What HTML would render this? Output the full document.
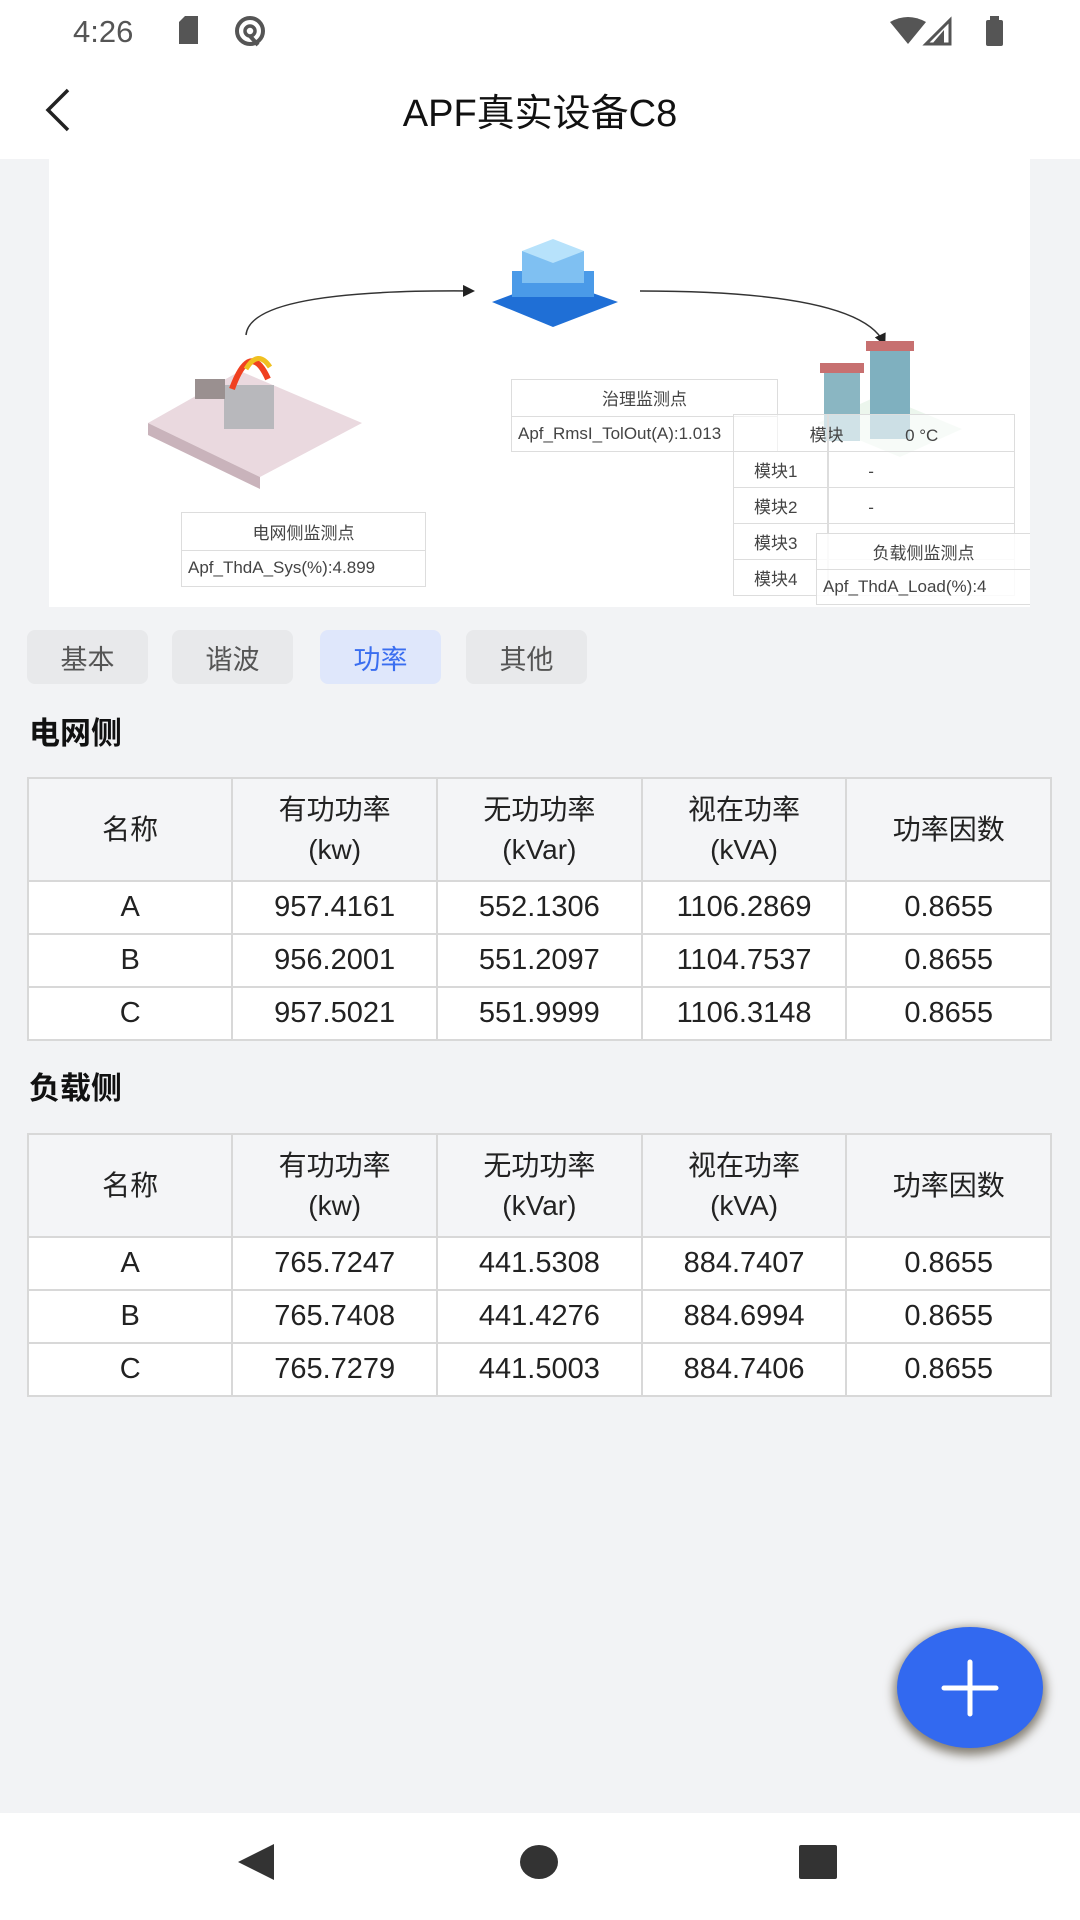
<!DOCTYPE html>
<html><head><meta charset="utf-8">
<style>
*{margin:0;padding:0;box-sizing:border-box}
body{width:1080px;height:1920px;position:relative;background:#f2f3f5;font-family:"Liberation Sans","Noto Sans CJK SC",sans-serif;color:#222;overflow:hidden}
.abs{position:absolute}
.top{left:0;top:0;width:1080px;height:159px;background:#fff}
.time{left:73px;top:14px;font-size:31px;color:#555}
.title{left:0;width:1080px;top:82px;text-align:center;font-size:38px;color:#111}
.diag{left:49px;top:159px;width:981px;height:448px;background:#fff}
.box{position:absolute;border:1.5px solid #ddd;background:rgba(255,255,255,.85);font-size:17px;color:#444}
.box div{height:50%;display:flex;align-items:center;justify-content:center;white-space:nowrap;overflow:hidden}
.box div+div{border-top:1.5px solid #ddd;justify-content:flex-start;padding-left:6px}
.tab{position:absolute;top:630px;height:54px;width:121px;border-radius:8px;background:#e8e9eb;font-size:27px;color:#555;display:flex;align-items:center;justify-content:center}
.tab.on{background:#dfe7fb;color:#3a6ef0}
.h{position:absolute;left:29px;font-size:31px;font-weight:bold;color:#111}
table{position:absolute;left:27px;width:1025px;border-collapse:collapse;font-size:29px;text-align:center;color:#222}
td{border:2px solid #d8d8d8;background:#fff;width:205px}
tr.hd td{background:#f4f5f7;height:103px;line-height:40px;font-size:28px}
tr.r td{height:53px}
.nav{left:0;top:1813px;width:1080px;height:107px;background:#fff}
.fab{left:897px;top:1627px;width:146px;height:121px;border-radius:50%;background:#3269f0;box-shadow:0 4px 10px 3px rgba(60,50,30,.6)}
</style></head><body>
<div class="abs top"></div>
<div class="abs time">4:26</div>
<svg class="abs" style="left:176px;top:16px" width="110" height="36" viewBox="0 0 110 36">
<path d="M3 6 L9 0 H22 V28 H3 Z" fill="#555"/>
<circle cx="74" cy="15" r="13" fill="none" stroke="#555" stroke-width="4"/>
<circle cx="74" cy="15" r="5" fill="none" stroke="#555" stroke-width="3.5"/>
<path d="M74 20 L82 29" stroke="#555" stroke-width="4"/>
</svg>
<svg class="abs" style="left:888px;top:16px" width="120" height="34" viewBox="0 0 120 34">
<path d="M2 6 Q20 -4 38 6 L20 28 Z" fill="#555"/>
<path d="M62 4 V28 H38 Z" fill="none" stroke="#555" stroke-width="3"/>
<path d="M56 14 V28 H44 Z" fill="#555"/>
<rect x="98" y="4" width="17" height="26" rx="2" fill="#555"/><rect x="102" y="0" width="9" height="5" fill="#555"/>
</svg>
<svg class="abs" style="left:40px;top:86px" width="40" height="48" viewBox="0 0 40 48"><path d="M28 4 L8 24 L28 44" fill="none" stroke="#222" stroke-width="3.5"/></svg>
<div class="abs title">APF真实设备C8</div>

<div class="abs diag"></div>
<svg class="abs" style="left:0;top:159px" width="1080" height="448">
<defs><marker id="m" markerWidth="8" markerHeight="8" refX="6" refY="4" orient="auto"><path d="M0 0 L8 4 L0 8Z" fill="#222"/></marker></defs>
<path d="M246 176 Q250 130 472 132" fill="none" stroke="#333" stroke-width="1.5" marker-end="url(#m)"/>
<path d="M640 132 Q860 132 884 184" fill="none" stroke="#333" stroke-width="1.5" marker-end="url(#m)"/>
<path d="M492 143 L553 120 L618 143 L553 168Z" fill="#1f6fd6"/>
<rect x="512" y="112" width="82" height="26" fill="#4a9ae8"/>
<rect x="522" y="92" width="62" height="32" fill="#7fc0f2"/>
<path d="M522 92 L553 80 L584 92 L553 104Z" fill="#b7e2fb"/>
<path d="M148 264 L240 212 L362 264 L260 318Z" fill="#ead9df"/>
<path d="M148 264 L260 318 L260 330 L148 276Z" fill="#c9b3bb"/>
<rect x="224" y="226" width="50" height="44" fill="#b8b8bc"/>
<rect x="195" y="220" width="30" height="20" fill="#9a9090"/>
<path d="M232 230 Q250 180 268 220" fill="none" stroke="#f04020" stroke-width="6"/>
<path d="M246 210 Q258 190 270 208" fill="none" stroke="#f0c020" stroke-width="5"/>
<path d="M818 264 L880 236 L962 270 L900 298Z" fill="#e4f2e6" opacity=".7"/>
<rect x="824" y="212" width="36" height="70" fill="#8ab6c2"/>
<rect x="870" y="190" width="40" height="90" fill="#7fb0bf"/>
<rect x="866" y="182" width="48" height="10" fill="#c77070"/>
<rect x="820" y="204" width="44" height="10" fill="#c77070"/>
</svg>
<div class="box" style="left:511px;top:379px;width:267px;height:73px"><div>治理监测点</div><div>Apf_RmsI_TolOut(A):1.013</div></div>
<div class="box" style="left:181px;top:512px;width:245px;height:75px"><div>电网侧监测点</div><div>Apf_ThdA_Sys(%):4.899</div></div>
<div class="box" style="left:733px;top:414px;width:282px;height:182px;background:rgba(255,255,255,.6)">
<div style="height:36px;border:0;justify-content:center">模块 &nbsp; &nbsp; &nbsp; &nbsp; &nbsp; &nbsp; 0 °C</div>
<div style="height:36px;justify-content:flex-start;padding-left:20px">模块1 &nbsp; &nbsp; &nbsp; &nbsp; &nbsp; &nbsp; &nbsp; -</div>
<div style="height:36px;justify-content:flex-start;padding-left:20px">模块2 &nbsp; &nbsp; &nbsp; &nbsp; &nbsp; &nbsp; &nbsp; -</div>
<div style="height:36px;justify-content:flex-start;padding-left:20px">模块3</div>
<div style="height:36px;justify-content:flex-start;padding-left:20px">模块4</div>
</div>
<div class="abs" style="left:827px;top:414px;width:1.5px;height:182px;background:#ddd"></div>
<div class="box" style="left:816px;top:533px;width:214px;height:72px;border-right:0"><div>负载侧监测点</div><div>Apf_ThdA_Load(%):4</div></div>

<div class="tab" style="left:27px">基本</div>
<div class="tab" style="left:172px">谐波</div>
<div class="tab on" style="left:320px">功率</div>
<div class="tab" style="left:466px">其他</div>

<div class="h" style="top:708px">电网侧</div>
<table style="top:777px">
<tr class="hd"><td>名称</td><td>有功功率<br>(kw)</td><td>无功功率<br>(kVar)</td><td>视在功率<br>(kVA)</td><td>功率因数</td></tr>
<tr class="r"><td>A</td><td>957.4161</td><td>552.1306</td><td>1106.2869</td><td>0.8655</td></tr>
<tr class="r"><td>B</td><td>956.2001</td><td>551.2097</td><td>1104.7537</td><td>0.8655</td></tr>
<tr class="r"><td>C</td><td>957.5021</td><td>551.9999</td><td>1106.3148</td><td>0.8655</td></tr>
</table>
<div class="h" style="top:1063px">负载侧</div>
<table style="top:1133px">
<tr class="hd"><td>名称</td><td>有功功率<br>(kw)</td><td>无功功率<br>(kVar)</td><td>视在功率<br>(kVA)</td><td>功率因数</td></tr>
<tr class="r"><td>A</td><td>765.7247</td><td>441.5308</td><td>884.7407</td><td>0.8655</td></tr>
<tr class="r"><td>B</td><td>765.7408</td><td>441.4276</td><td>884.6994</td><td>0.8655</td></tr>
<tr class="r"><td>C</td><td>765.7279</td><td>441.5003</td><td>884.7406</td><td>0.8655</td></tr>
</table>

<div class="abs fab"></div>
<svg class="abs" style="left:940px;top:1658px" width="60" height="60"><path d="M30 4 V56 M4 30 H56" stroke="#fff" stroke-width="5" stroke-linecap="round"/></svg>

<div class="abs nav"></div>
<svg class="abs" style="left:0;top:1813px" width="1080" height="107">
<path d="M238 49 L274 31 V67 Z" fill="#333"/>
<ellipse cx="539" cy="49" rx="19" ry="17" fill="#333"/>
<rect x="799" y="32" width="38" height="34" rx="2" fill="#333"/>
</svg>
</body></html>
